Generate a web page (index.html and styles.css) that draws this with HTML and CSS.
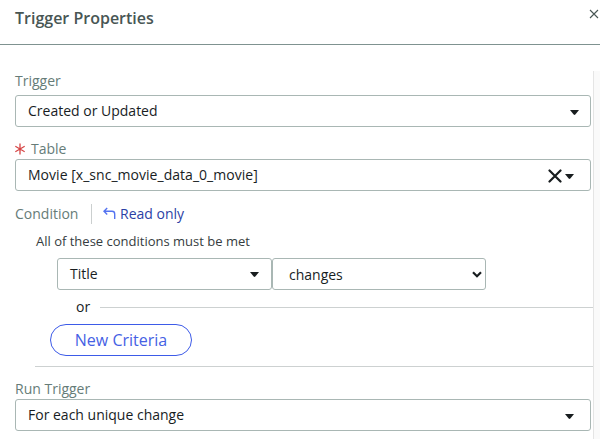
FILE: index.html
```html
<!DOCTYPE html>
<html lang="en">
<head>
<meta charset="utf-8">
<title>Trigger Properties</title>
<link rel="stylesheet" href="styles.css">
</head>
<body>
<header class="header">
  <h1 class="title">Trigger Properties</h1>
  <svg class="close" viewBox="0 0 10 10"><path d="M1 1l8 8M9 1l-8 8"/></svg>
</header>
<main class="panel">
  <form class="form">
    <div class="label label-first"><span>Trigger</span></div>
    <div class="field">
      <span class="value">Created or Updated</span>
      <svg class="caret caret-inset" viewBox="0 0 9 5"><path d="M0 0h9L5.3 4.6q-.8.8-1.6 0z"/></svg>
    </div>
    <div class="label label-table">
      <svg class="required" viewBox="0 0 10 12"><path d="M5 .5v11M.3 3.2l9.4 5.6M9.7 3.2L.3 8.8"/></svg>
      <span>Table</span>
    </div>
    <div class="field">
      <span class="value table-name">Movie [x_snc_movie_data_0_movie]</span>
      <svg class="clear" viewBox="0 0 14 14"><path d="M1.5 1.5l11 11M12.5 1.5l-11 11"/></svg>
      <svg class="caret" viewBox="0 0 9 5"><path d="M0 0h9L5.3 4.6q-.8.8-1.6 0z"/></svg>
    </div>
    <div class="condition">
      <span class="condition-label">Condition</span>
      <a class="readonly">
        <svg class="undo" viewBox="0 0 13 13"><path d="M4.2 1L1 4.2l3.2 3.2M1 4.2h8q2.700 0 2.700 2.700V12"/></svg>
        <span>Read only</span>
      </a>
    </div>
    <section class="criteria">
      <p class="hint">All of these conditions must be met</p>
      <div class="filters">
        <div class="field filter">
          <span class="value">Title</span>
          <svg class="caret caret-filter" viewBox="0 0 9 5"><path d="M0 0h9L5.3 4.6q-.8.8-1.6 0z"/></svg>
        </div>
        <div class="field filter operator">
          <span class="value">changes</span>
          <svg class="chevron" viewBox="0 0 10 7"><path d="M1 1.300l4 4 4-4"/></svg>
        </div>
      </div>
      <div class="or"><span>or</span></div>
      <button class="new-criteria" type="button">New Criteria</button>
    </section>
    <div class="label label-run"><span>Run Trigger</span></div>
    <div class="field">
      <span class="value">For each unique change</span>
      <svg class="caret" viewBox="0 0 9 5"><path d="M0 0h9L5.3 4.6q-.8.8-1.6 0z"/></svg>
    </div>
  </form>
  <div class="gutter"></div>
</main>
</body>
</html>
```
FILE: styles.css
```css
* { box-sizing: border-box; }
body {
  margin: 0;
  height: 439px;
  overflow: hidden;
  display: flex;
  flex-direction: column;
  background: #fff;
  color: #181d1f;
  font: 14px/20px "Open Sans", sans-serif;
}
svg { display: block; flex: none; fill: none; }
.header {
  display: flex;
  justify-content: space-between;
  height: 45px;
  padding: 8px 1px 0 15px;
  border-bottom: 1px solid #7f9290;
}
.title { margin: 0; font-size: 16px; line-height: 20px; font-weight: 600; color: #485654; }
.close { width: 10px; height: 10px; margin-top: 1px; stroke: #485654; stroke-width: 1.1; }
.panel { display: flex; flex: 1; margin-top: 26px; }
.form { width: 593px; padding-left: 15px; }
.gutter { flex: 1; background: #fafafa; border-left: 1px solid #e5e5e5; }
.label { display: flex; align-items: center; height: 20px; color: #667c78; }
.label-first { margin-bottom: 4px; }
.label-table { margin-top: 12px; gap: 6px; }
.required { width: 10px; height: 12px; stroke: #d64545; stroke-width: 1.3; }
.field {
  display: flex;
  align-items: center;
  width: 576px;
  height: 32px;
  padding: 0 16px 0 12px;
  border: 1px solid #a9b7b4;
  border-radius: 3px;
}
.value { flex: 1; }
.table-name { letter-spacing: .03px; }
.caret { width: 9px; height: 5px; margin-top: 3px; fill: #181d1f; }
.caret-inset { margin-right: -5px; }
.clear { width: 14px; height: 14px; margin-top: 1px; margin-right: 3px; stroke: #181d1f; stroke-width: 2.2; stroke-linecap: round; }
.condition { display: flex; align-items: center; height: 20px; margin-top: 13px; }
.condition-label { width: 77px; height: 20px; border-right: 1px solid #cbcfcf; color: #667c78; }
.readonly { display: flex; margin-left: 11px; gap: 4px; color: #2c3fa5; }
.undo { width: 13px; height: 13px; margin-top: 3px; stroke: #5473f0; stroke-width: 1.4; }
.criteria {
  height: 136px;
  margin: 7px 0 0 20px;
  border-bottom: 1px solid #cdd1d1;
}
.hint { margin: 0 0 7px 1px; font-size: 13px; color: #363c3e; }
.filters { display: flex; margin-left: 22px; }
.filter { width: 215px; }
.caret-filter { margin: 1px -4px 0 0; }
.operator { width: 214px; padding: 2px 3px 0 16px; }
.chevron { width: 10px; height: 7px; margin-top: -2px; stroke: #181d1f; stroke-width: 2.2; }
.or { display: flex; align-items: center; margin: 7px 0 7px 41px; gap: 10px; }
.or::after { content: ""; flex: 1; height: 1px; background: #cdd1d1; }
.new-criteria {
  display: block;
  width: 142px;
  height: 32px;
  margin-left: 15px;
  padding: 0;
  border: 1px solid #3d5be8;
  border-radius: 16px;
  background: #fff;
  color: #4561e4;
  font: 16px/20px "Open Sans", sans-serif;
}
.label-run { margin-top: 12px; }
```
